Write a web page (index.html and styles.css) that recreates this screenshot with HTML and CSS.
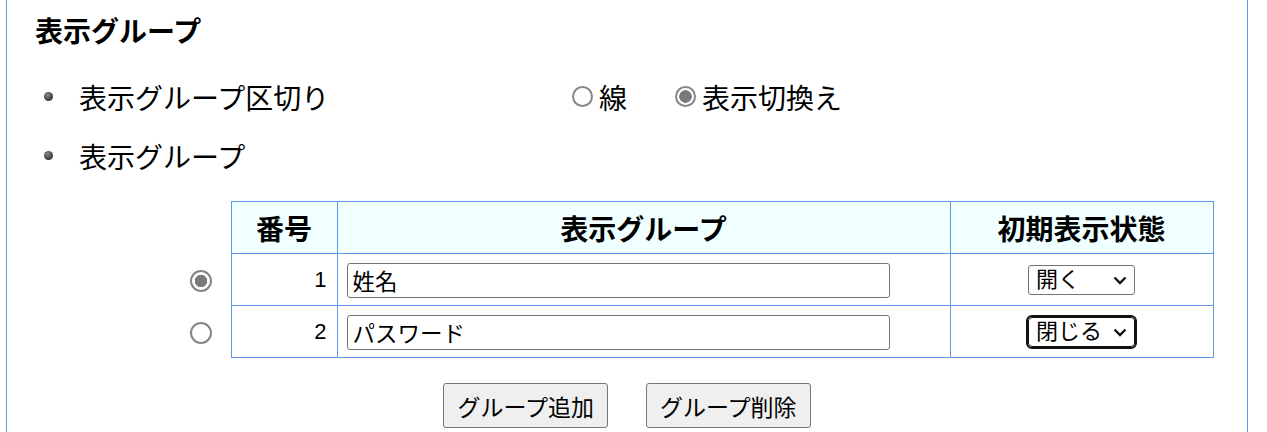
FILE: index.html
```html
<!DOCTYPE html>
<html>
<head>
<meta charset="utf-8">
<link rel="stylesheet" href="styles.css">
</head>
<body>
<div class="panel">
   <h2 class="title">表示グループ</h2>
   <ul class="items">
      <li class="item">
         <span class="label">表示グループ区切り</span>
         <label class="opt"><input type="radio" name="sep" class="radio">線</label>
         <label class="opt"><input type="radio" name="sep" class="radio" checked>表示切換え</label>
      </li>
      <li class="item">
         <span class="label">表示グループ</span>
      </li>
   </ul>
   <table class="groups">
      <colgroup>
         <col class="c-sel">
         <col class="c-no">
         <col class="c-name">
         <col class="c-state">
      </colgroup>
      <tr>
         <th class="sel"></th>
         <th>番号</th>
         <th>表示グループ</th>
         <th>初期表示状態</th>
      </tr>
      <tr>
         <td class="sel"><input type="radio" name="grp" class="radio" checked></td>
         <td class="no">1</td>
         <td class="name"><input type="text" class="text" value="姓名"></td>
         <td class="state">
            <span class="pick">
               <select class="dd">
                  <option selected>開く</option>
                  <option>閉じる</option>
               </select>
               <svg class="chev" width="14" height="9" viewBox="0 0 14 9"><path d="M1.5 1.5 L7 7 L12.5 1.5" fill="none" stroke="#111" stroke-width="2.4"/></svg>
            </span>
         </td>
      </tr>
      <tr>
         <td class="sel"><input type="radio" name="grp" class="radio"></td>
         <td class="no">2</td>
         <td class="name"><input type="text" class="text" value="パスワード"></td>
         <td class="state">
            <span class="pick">
               <select class="dd focused">
                  <option>開く</option>
                  <option selected>閉じる</option>
               </select>
               <svg class="chev" width="14" height="9" viewBox="0 0 14 9"><path d="M1.5 1.5 L7 7 L12.5 1.5" fill="none" stroke="#111" stroke-width="2.4"/></svg>
            </span>
         </td>
      </tr>
   </table>
   <div class="buttons">
      <button class="btn">グループ追加</button>
      <button class="btn">グループ削除</button>
   </div>
</div>
</body>
</html>
```

FILE: styles.css
```css
body{
   margin: 0;
   font-family: "Liberation Sans", "Noto Sans CJK JP", sans-serif;
   color: #000;
   background: #fff;
}
.panel{
   margin: 0 19px 0 6px;
   border-left: 1px solid #6495ed;
   border-right: 1px solid #6495ed;
   padding: 13px 0 40px 0;
   height: 432px;
   box-sizing: border-box;
}
.title{
   margin: 0 0 0 28px;
   font-size: 28px;
   line-height: 40px;
   font-weight: bold;
}
.items{
   list-style: none;
   margin: 14px 0 0 0;
   padding: 0 0 0 37px;
}
.item{
   display: flex;
   align-items: center;
   height: 59px;
   font-size: 28px;
}
.item::before{
   content: "";
   width: 9px;
   height: 9px;
   border-radius: 50%;
   background: radial-gradient(circle at 40% 35%, #8a8a8a, #2e2e2e 75%);
   margin-right: 26px;
}
.label{
   width: 493px;
}
.opt{
   display: flex;
   align-items: center;
   margin-right: 48px;
}
.radio{
   -webkit-appearance: none;
   appearance: none;
   width: 21px;
   height: 21px;
   margin: 0 6px 0 0;
   border: 2px solid #858585;
   border-radius: 50%;
   background: #fff;
   box-sizing: border-box;
}
.radio:checked{
   background: radial-gradient(circle, #7a7a7a 0, #7a7a7a 6px, #fff 6.5px);
}
.groups{
   border-collapse: collapse;
   table-layout: fixed;
   margin: 16px 0 0 173px;
   width: 1033px;
}
.c-sel{ width: 51px; }
.c-no{ width: 106px; }
.c-name{ width: 613px; }
.c-state{ width: 263px; }
.groups th,
.groups td{
   border: 1px solid #6495ed;
   padding: 0;
}
.groups th{
   height: 51px;
   background: #f0ffff;
   font-size: 28px;
   font-weight: bold;
}
.groups td{
   height: 51px;
}
.groups .sel{
   border: none;
   background: none;
   text-align: right;
   padding-right: 19px;
}
.groups .sel .radio{
   width: 22px;
   height: 22px;
   margin: 3px 0 0 0;
   vertical-align: middle;
}
.groups .no{
   text-align: right;
   padding-right: 10px;
   font-size: 22px;
}
.groups .name{
   padding-left: 9px;
}
.text{
   width: 543px;
   height: 35px;
   box-sizing: border-box;
   border: 1px solid #767676;
   border-radius: 3px;
   padding: 0 5px;
   font-family: "Liberation Sans", "Noto Sans CJK JP", sans-serif;
   font-size: 22.5px;
   vertical-align: middle;
   margin-top: 1px;
}
.state{
   text-align: center;
}
.pick{
   display: inline-block;
   position: relative;
   vertical-align: middle;
}
.dd{
   -webkit-appearance: none;
   appearance: none;
   width: 107px;
   height: 30px;
   box-sizing: border-box;
   border: 1px solid #767676;
   border-radius: 3px;
   background: #fff;
   padding: 0 0 0 7px;
   font-family: "Liberation Sans", "Noto Sans CJK JP", sans-serif;
   font-size: 22px;
   line-height: 28px;
   color: #000;
   display: block;
}
.dd.focused{
   border-color: #111;
   outline: 2px solid #111;
   outline-offset: 0;
   border-radius: 4px;
}
.chev{
   position: absolute;
   right: 8px;
   top: 11px;
}
.buttons{
   display: flex;
   justify-content: center;
   gap: 38px;
   margin-top: 25px;
}
.btn{
   height: 45px;
   padding: 0 13px;
   background: #efefef;
   border: 1px solid #767676;
   border-radius: 3px;
   font-family: "Liberation Sans", "Noto Sans CJK JP", sans-serif;
   font-size: 23px;
   color: #000;
}
```
